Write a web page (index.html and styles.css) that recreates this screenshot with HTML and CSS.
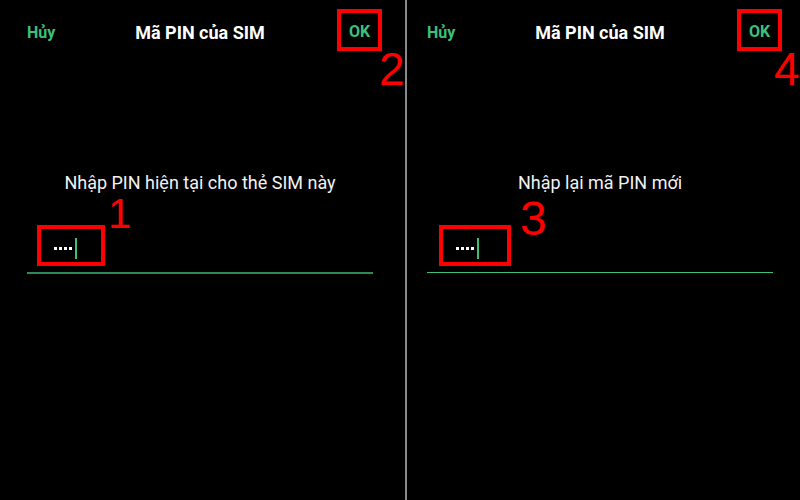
FILE: index.html
```html
<!DOCTYPE html>
<html lang="vi">
<head>
    <meta charset="UTF-8">
    <meta name="viewport" content="width=device-width, initial-scale=1.0">
    <title>Mã PIN của SIM</title>
    <link rel="stylesheet" href="styles.css">
</head>
<body>
    <div class="shots">
        <section class="phone">
            <div class="dialog">
                <header class="bar">
                    <button class="action">Hủy</button>
                    <h1 class="title">Mã PIN của SIM</h1>
                    <button class="action ok mark">OK<span class="step step-ok">2</span></button>
                </header>
                <div class="content">
                    <p class="prompt">Nhập PIN hiện tại cho thẻ SIM này</p>
                    <div class="field">
                        <div class="value mark">
                            <span class="dot"></span><span class="dot"></span><span class="dot"></span><span class="dot"></span>
                            <span class="cursor"></span>
                            <span class="step step-one">1</span>
                        </div>
                    </div>
                </div>
            </div>
        </section>

        <div class="divider"></div>

        <section class="phone second">
            <div class="dialog">
                <header class="bar">
                    <button class="action">Hủy</button>
                    <h1 class="title">Mã PIN của SIM</h1>
                    <button class="action ok mark">OK<span class="step step-ok step-last">4</span></button>
                </header>
                <div class="content">
                    <p class="prompt">Nhập lại mã PIN mới</p>
                    <div class="field light">
                        <div class="value mark wide">
                            <span class="dot"></span><span class="dot"></span><span class="dot"></span><span class="dot"></span>
                            <span class="cursor"></span>
                            <span class="step step-three">3</span>
                        </div>
                    </div>
                </div>
            </div>
        </section>
    </div>
</body>
</html>
```

FILE: styles.css
```css
body {
    margin: 0;
    padding: 0;
    background-color: #000;
    font-family: Roboto, "Noto Sans", Arial, sans-serif;
    color: #fff;
}
.shots {
    display: flex;
    width: 800px;
    height: 500px;
    overflow: hidden;
}
.phone {
    width: 405px;
    overflow: hidden;
}
.phone.second {
    width: 393px;
}
.phone.second .dialog {
    margin-left: -7px;
}
.divider {
    width: 2px;
    background-color: #8a8a8a;
}
.dialog {
    width: 400px;
}
.bar {
    display: grid;
    grid-template-columns: 1fr auto 1fr;
    align-items: center;
    padding: 9px 18px 0;
}
.action {
    background: none;
    border: none;
    padding: 4px 9px 0;
    font-family: inherit;
    font-size: 16px;
    font-weight: bold;
    color: #3ec07b;
    justify-self: start;
}
.action.ok {
    justify-self: end;
    position: relative;
    width: 45px;
    height: 42px;
    padding: 2px 0 0;
}
.title {
    margin: 0;
    font-size: 18px;
    font-weight: bold;
    padding-top: 4px;
}
.mark {
    border: 4px solid #ff0000;
    box-sizing: border-box;
}
.step {
    position: absolute;
    font-family: "Liberation Sans", Arial, sans-serif;
    font-weight: normal;
    color: #ff0000;
    line-height: 1;
}
.step-ok {
    left: 38px;
    top: 33px;
    font-size: 46px;
}
/* the last number sits against the right edge */
.step-last {
    left: 33px;
}
.step-one {
    left: 67px;
    top: -36px;
    font-size: 42px;
}
.step-three {
    left: 77px;
    top: -34px;
    font-size: 48px;
}
.content {
    padding: 0 27px;
}
.prompt {
    margin: 121px 0 0;
    text-align: center;
    font-size: 18px;
    color: #f2f2f2;
}
.field {
    margin-top: 32px;
    padding-bottom: 6px;
    border-bottom: 2px solid #2e8a57;
}
.field.light {
    border-bottom: 1px solid #3ec07b;
}
.value {
    position: relative;
    display: flex;
    align-items: center;
    width: 68px;
    height: 41px;
    margin-left: 10px;
    padding: 6px 0 0 13px;
}
.value.wide {
    width: 72px;
    margin-left: 12px;
}
.dot {
    width: 3px;
    height: 3px;
    margin-right: 2px;
    background-color: #fff;
}
.cursor {
    width: 2px;
    height: 21px;
    margin-left: 1px;
    background-color: #3ec07b;
}
```
